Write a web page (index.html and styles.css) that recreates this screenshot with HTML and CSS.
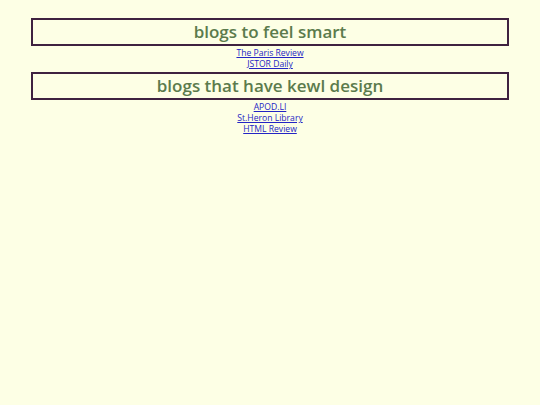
FILE: index.html
```html
<!DOCTYPE html>
<html lang="en">
<head>
<meta charset="utf-8">
<title>blogs</title>
<link rel="stylesheet" href="styles.css">
</head>
<body>
  <section class="group">
    <h2 class="group-title">blogs to feel smart</h2>
    <ul class="links">
      <li><a href="#">The Paris Review</a></li>
      <li><a href="#">JSTOR Daily</a></li>
    </ul>
  </section>
  <section class="group">
    <h2 class="group-title">blogs that have kewl design</h2>
    <ul class="links">
      <li><a href="#">APOD.LI</a></li>
      <li><a href="#">St.Heron Library</a></li>
      <li><a href="#">HTML Review</a></li>
    </ul>
  </section>
</body>
</html>
```

FILE: styles.css
```css
html, body {
  background: #fdffe5;
}

body {
  margin: 0;
  padding: 18px 31px;
  font-family: "Open Sans", sans-serif;
}

.group-title {
  margin: 0;
  border: 2px solid #3f2240;
  font-size: 17px;
  line-height: 24px;
  font-weight: 600;
  color: #5b7b4c;
  text-align: center;
}

.links {
  list-style: none;
  margin: 2px 0 2px;
  padding: 0;
  text-align: center;
  font-size: 8.6px;
  line-height: 11px;
}

.links a {
  color: #2424c4;
}
```
